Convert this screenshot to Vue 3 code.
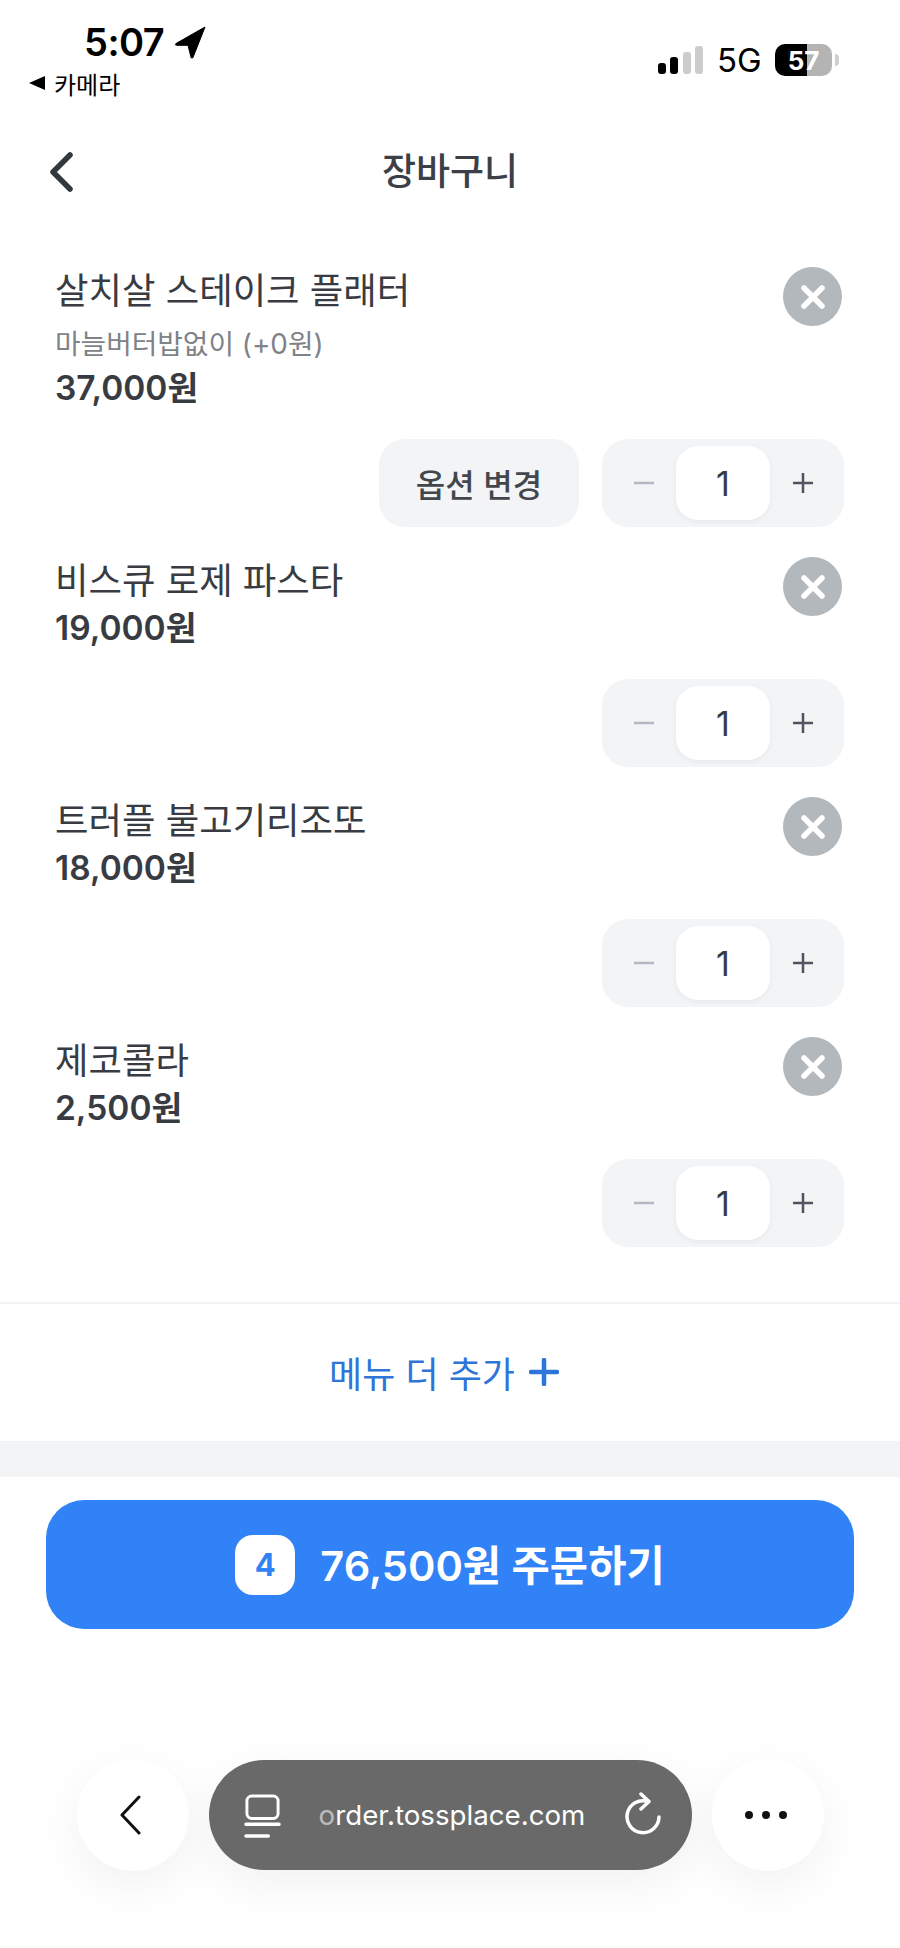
<template>
  <div class="page">
    <header class="status">
      <div class="status-left">
        <div class="clock">
          <span>5:07</span>
          <svg width="32" height="33" viewBox="0 0 32 33"><path d="M31 1 2 17.500c-1 .6-.7 1.800.5 1.800H14l3 12c.3 1.100 1.600 1.100 2 .1z" fill="#000" stroke="#000" stroke-linejoin="round" /></svg>
        </div>
        <div class="camera">
          <i class="camera-arrow" />
          <span>카메라</span>
        </div>
      </div>
      <div class="status-right">
        <svg width="46" height="28" viewBox="0 0 46 28">
          <rect x="0" y="17" width="8" height="11" rx="3" fill="#000" />
          <rect x="12" y="11" width="8" height="17" rx="3" fill="#000" />
          <rect x="25" y="6" width="8" height="22" rx="3" fill="#ccc" />
          <rect x="37" y="0" width="8" height="28" rx="3" fill="#ccc" />
        </svg>
        <span class="network">5G</span>
        <div class="battery"><span>57</span></div>
      </div>
    </header>

    <nav class="title-bar">
      <svg class="title-back" width="26" height="40" viewBox="0 0 26 40" fill="none"><path d="M22 3 5 20l17 17" stroke="#33383e" stroke-width="5.500" stroke-linecap="round" stroke-linejoin="round" /></svg>
      <h1>장바구니</h1>
    </nav>

    <section class="cart">
      <article v-for="item in items" :key="item.name" class="item">
        <div class="item-top">
          <div class="info">
            <p class="name">{{ item.name }}</p>
            <p v-if="item.option" class="option">{{ item.option }}</p>
            <p class="price">{{ item.price }}</p>
          </div>
          <button type="button" class="remove">
            <svg width="30" height="30" viewBox="0 0 30 30"><path d="M6 6l18 18M24 6 6 24" stroke="#fff" stroke-width="5.500" stroke-linecap="round" /></svg>
          </button>
        </div>
        <div class="controls">
          <button v-if="item.option" type="button" class="change">옵션 변경</button>
          <div class="stepper">
            <span class="step">
              <svg width="22" height="22" viewBox="0 0 22 22"><path d="M1 11h20" stroke="#b0b8c1" stroke-width="2.500" /></svg>
            </span>
            <span class="qty">1</span>
            <span class="step">
              <svg width="22" height="22" viewBox="0 0 22 22"><path d="M1 11h20M11 1v20" stroke="#4e5560" stroke-width="2.500" /></svg>
            </span>
          </div>
        </div>
      </article>
    </section>

    <div class="add-row">
      <span>메뉴 더 추가</span>
      <svg width="30" height="28" viewBox="0 0 30 28"><path d="M2 14h26M15 2v24" stroke="#2f74d9" stroke-width="4.500" stroke-linecap="round" /></svg>
    </div>
    <div class="band" />

    <div class="order-wrap">
      <button type="button" class="order">
        <span class="count">4</span>
        <span class="order-label">76,500원 주문하기</span>
      </button>
    </div>

    <footer class="browser">
      <div class="round round-back">
        <svg width="22" height="40" viewBox="0 0 22 40" fill="none"><path d="M20 2 3 20l17 18" stroke="#111" stroke-width="3" stroke-linecap="round" stroke-linejoin="round" /></svg>
      </div>
      <div class="url-bar">
        <svg class="reader" width="37" height="46" viewBox="0 0 38 47" fill="none">
          <rect x="3" y="2" width="32" height="23" rx="5" stroke="#fff" stroke-width="3" />
          <path d="M2 31h34M2 43h23" stroke="#fff" stroke-width="3.500" stroke-linecap="round" />
        </svg>
        <span class="url"><span class="url-fade">o</span>rder.tossplace.com</span>
        <svg class="reload" width="38" height="44" viewBox="0 0 38 44" fill="none">
          <path d="M24 9.500A16 16 0 1 0 35 25" stroke="#fff" stroke-width="3.500" stroke-linecap="round" />
          <path d="M17 2l8 7.500-8 7.500" stroke="#fff" stroke-width="3.500" stroke-linecap="round" stroke-linejoin="round" />
        </svg>
      </div>
      <div class="round round-more">
        <svg width="44" height="10" viewBox="0 0 44 10"><circle cx="5" cy="5" r="4" fill="#111" /><circle cx="22" cy="5" r="4" fill="#111" /><circle cx="39" cy="5" r="4" fill="#111" /></svg>
      </div>
    </footer>
  </div>
</template>

<script setup>
const items = [
  { name: '살치살 스테이크 플래터', option: '마늘버터밥없이 (+0원)', price: '37,000원' },
  { name: '비스큐 로제 파스타', price: '19,000원' },
  { name: '트러플 불고기리조또', price: '18,000원' },
  { name: '제코콜라', price: '2,500원' }
]
</script>

<style scoped>
.page {
  width: 900px;
  height: 1948px;
  overflow: hidden;
  background: #fff;
  color: #383c42;
  font-family: Inter, 'Noto Sans CJK KR', sans-serif;
}

.status {
  height: 124px;
  display: flex;
  justify-content: space-between;
  box-sizing: border-box;
  padding: 20px 68px 0 29px;
  color: #000;
}

.clock {
  display: flex;
  align-items: center;
  gap: 10px;
  margin-left: 55px;
  height: 44px;
  font-size: 38px;
  font-weight: 600;
  letter-spacing: -0.5px;
}

.camera {
  display: flex;
  align-items: center;
  gap: 9px;
  height: 34px;
  margin-top: 2px;
  font-size: 24px;
}

.camera-arrow {
  width: 0;
  height: 0;
  border-top: 7px solid transparent;
  border-bottom: 7px solid transparent;
  border-right: 16px solid #000;
}

.status-right {
  display: flex;
  align-items: center;
  height: 32px;
  margin-top: 24px;
}

.network {
  margin-left: 13px;
  font-size: 33px;
  width: 58px;
}

.battery {
  position: relative;
  width: 57px;
  height: 32px;
  display: grid;
  place-items: center;
  border-radius: 10px;
  background: linear-gradient(90deg, #000 57%, #b4b4b4 57%);
  color: #fff;
  font-size: 26px;
  font-weight: 700;
}

.battery::after {
  content: '';
  position: absolute;
  right: -7px;
  top: 10px;
  width: 4px;
  height: 12px;
  border-radius: 0 4px 4px 0;
  background: #cfcfcf;
}

.title-bar {
  position: relative;
  height: 96px;
  display: grid;
  place-items: center;
}

.title-bar h1 {
  margin: 0 0 6px;
  font-size: 37px;
  font-weight: 500;
  color: #3c4046;
}

.title-back {
  position: absolute;
  left: 48px;
  top: 28px;
}

.cart {
  display: grid;
  gap: 30px;
  padding: 47px 56px 55px 55px;
  border-bottom: 2px solid #f2f4f6;
}

.item-top {
  display: flex;
  justify-content: space-between;
  padding-right: 2px;
}

.info {
  padding-top: 1px;
}

.item-top p {
  margin: 0;
}

.name {
  font-size: 36.400px;
  line-height: 46px;
}

.item-top .option {
  margin-top: 10px;
  font-size: 27.800px;
  line-height: 40px;
  color: #7f8388;
}

.item-top .price {
  margin-top: -1px;
  font-size: 33.500px;
  line-height: 50px;
  font-weight: 600;
}

.remove {
  width: 59px;
  height: 59px;
  padding: 0;
  display: grid;
  place-items: center;
  border: 0;
  border-radius: 50%;
  background: #b3b8bc;
}

.controls {
  display: flex;
  justify-content: flex-end;
  gap: 23px;
  margin-top: 26px;
}

.change {
  width: 200px;
  height: 88px;
  padding: 0;
  border: 0;
  border-radius: 26px;
  background: #f2f4f6;
  color: #43474d;
  font-family: inherit;
  font-size: 32px;
  font-weight: 500;
}

.stepper {
  width: 242px;
  height: 88px;
  box-sizing: border-box;
  display: grid;
  grid-template-columns: 64px 94px 66px;
  padding: 7px 8px 7px 10px;
  border-radius: 26px;
  background: #f2f4f6;
}

.step {
  display: grid;
  place-items: center;
}

.qty {
  display: grid;
  place-items: center;
  border-radius: 22px;
  background: #fff;
  box-shadow: 0 2px 6px rgba(0, 0, 0, 0.05);
  font-size: 34px;
}

.add-row {
  height: 137px;
  box-sizing: border-box;
  padding: 0 12px 2px 0;
  display: flex;
  align-items: center;
  justify-content: center;
  gap: 14px;
  color: #2f74d9;
  font-size: 36px;
}

.band {
  height: 36px;
  background: #f2f4f6;
}

.order-wrap {
  padding: 23px 46px 0;
}

.order {
  width: 100%;
  height: 129px;
  display: flex;
  align-items: center;
  justify-content: center;
  gap: 25px;
  border: 0;
  border-radius: 38px;
  background: #3182f6;
  color: #fff;
  font-family: inherit;
  font-size: 41.600px;
  font-weight: 600;
}

.order-label {
  margin-bottom: 3px;
}

.count {
  width: 60px;
  height: 60px;
  display: grid;
  place-items: center;
  border-radius: 18px;
  background: #fff;
  color: #3182f6;
  font-size: 31px;
  font-weight: 700;
}

.browser {
  display: flex;
  align-items: center;
  justify-content: center;
  gap: 20px;
  margin-top: 130px;
}

.round {
  width: 112px;
  height: 112px;
  display: grid;
  place-items: center;
  border-radius: 50%;
  background: #fff;
  box-shadow: 0 14px 50px rgba(0, 0, 0, 0.06);
}

.round-back svg {
  margin-right: 6px;
}

.round-more svg {
  margin-right: 3px;
}

.url-bar {
  width: 483px;
  height: 110px;
  box-sizing: border-box;
  display: flex;
  align-items: center;
  justify-content: space-between;
  padding: 0 30px 0 35px;
  border-radius: 55px;
  background: #696969;
  box-shadow: 0 14px 50px rgba(0, 0, 0, 0.06);
}

.reader {
  margin-top: 4px;
}

.reload {
  margin-top: -3px;
}

.url {
  color: #fff;
  font-family: Inter, sans-serif;
  font-size: 27.700px;
}

.url-fade {
  opacity: 0.55;
}
</style>

<style>
body {
  background: #fff;
}
</style>
